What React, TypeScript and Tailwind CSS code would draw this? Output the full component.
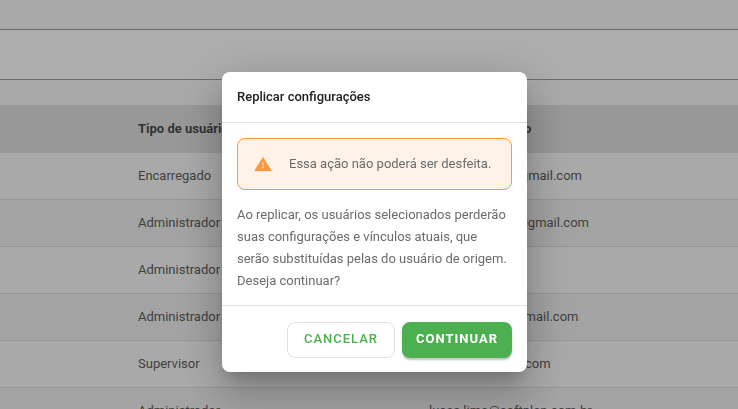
import { useState } from "react";

interface UserRow {
  type: string;
  email: string;
}

const USERS: UserRow[] = [
  { type: "Encarregado", email: "marco.pereira@gmail.com" },
  { type: "Administrador", email: "fernanda.costa@gmail.com" },
  { type: "Administrador", email: "ana@gmail.com" },
  { type: "Administrador", email: "mario.pereira@gmail.com" },
  { type: "Supervisor", email: "pedro@softplan.com" },
  { type: "Administrador", email: "lucas.lima@softplan.com.br" },
];

function WarningIcon() {
  return (
    <svg viewBox="0 0 24 24" className="size-5 shrink-0" aria-hidden="true">
      <path fill="#ff9838" d="M1.4 20.4h21.2L12 3.4z" />
      <path fill="#ffdcbc" d="M11 10h2v4.2h-2zM11 15.4h2v1.8h-2z" />
    </svg>
  );
}

function UsersTable() {
  return (
    <table className="w-full table-fixed border-separate border-spacing-0 text-left text-[13px] text-[#5f5f5f]">
      <thead>
        <tr className="h-12 bg-[#e0e0e0] text-[#4d4d4d]">
          <th className="w-[138px]" />
          <th className="w-[291px] font-bold">Tipo de usuário</th>
          <th className="font-bold">E-mail do usuário</th>
        </tr>
      </thead>
      <tbody>
        {USERS.map((user, index) => (
          <tr key={index} className="h-[47px] bg-[#fafafa] even:bg-[#f0f0f0] *:border-b *:border-[#dcdcdc]">
            <td />
            <td>{user.type}</td>
            <td>{user.email}</td>
          </tr>
        ))}
      </tbody>
    </table>
  );
}

function ConfirmDialog({ onClose }: { onClose: () => void }) {
  return (
    <div className="fixed inset-0 z-10 flex items-start justify-center bg-black/32 pt-[72px] pl-[11px]">
      <div
        role="dialog"
        aria-modal="true"
        aria-labelledby="dialog-title"
        className="w-[305px] rounded-lg bg-white shadow-[0_11px_15px_-7px_rgba(0,0,0,0.2),0_24px_38px_3px_rgba(0,0,0,0.14),0_9px_46px_8px_rgba(0,0,0,0.12)]"
      >
        <h2 id="dialog-title" className="border-b border-[#e0e0e0] px-[15px] py-4 text-[13px] leading-[18px] font-medium text-[#212121]">
          Replicar configurações
        </h2>

        <div className="px-[15px] pt-[15px] pb-[13px] text-[13px] text-[#6b6b6b]">
          <div className="flex h-[52px] items-center gap-4 rounded-lg border border-[#ff9838] bg-[#fff3e9] px-[15px]">
            <WarningIcon />
            <span className="whitespace-nowrap">Essa ação não poderá ser desfeita.</span>
          </div>
          <p className="mt-[14px] leading-[22px]">
            Ao replicar, os usuários selecionados perderão suas configurações e vínculos atuais, que serão substituídas
            pelas do usuário de origem. Deseja continuar?
          </p>
        </div>

        <div className="flex justify-end gap-[7px] border-t border-[#e0e0e0] px-[15px] pt-4 pb-[14px] text-[13px] tracking-[1px]">
          <button
            type="button"
            onClick={onClose}
            className="h-9 rounded-lg border border-[#e0e0e0] px-4 pb-[3px] font-medium text-[#4caf50]"
          >
            CANCELAR
          </button>
          <button
            type="button"
            onClick={onClose}
            className="h-9 rounded-lg bg-[#4caf50] px-[14px] pb-[3px] font-bold text-white shadow-[0_2px_2px_rgba(0,0,0,0.24)]"
          >
            CONTINUAR
          </button>
        </div>
      </div>
    </div>
  );
}

export default function App() {
  const [open, setOpen] = useState(true);

  return (
    <div className="h-screen overflow-hidden bg-[#fafafa] font-[Roboto,sans-serif]">
      <div className="h-[29px]" />
      <div className="mb-[25px] h-[51px] border-y border-[#a0a0a0] bg-white" />
      <UsersTable />
      {open && <ConfirmDialog onClose={() => setOpen(false)} />}
    </div>
  );
}
